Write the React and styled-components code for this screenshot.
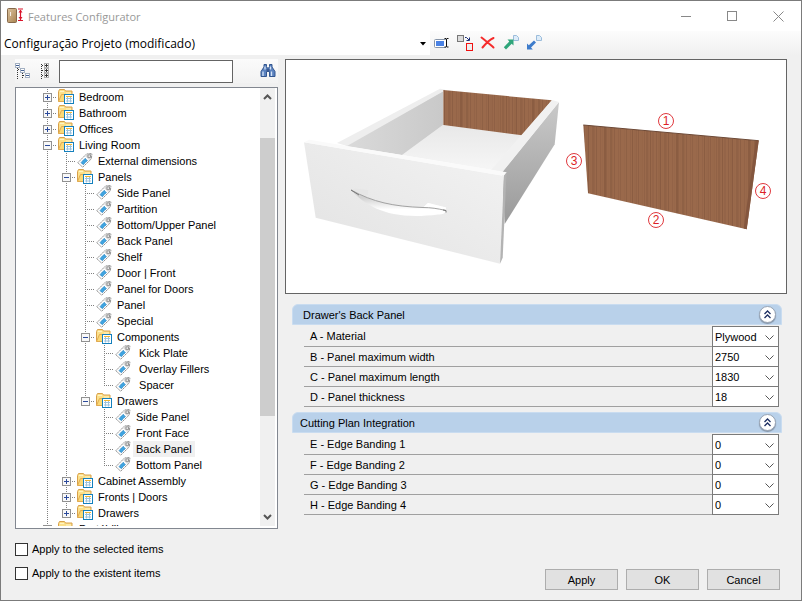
import React from "react";
import styled, { createGlobalStyle, css } from "styled-components";

const tree = [
  { label: "Bedroom", closed: true },
  { label: "Bathroom", closed: true },
  { label: "Offices", closed: true },
  {
    label: "Living Room",
    children: [
      { label: "External dimensions" },
      {
        label: "Panels",
        children: [
          { label: "Side Panel" },
          { label: "Partition" },
          { label: "Bottom/Upper Panel" },
          { label: "Back Panel" },
          { label: "Shelf" },
          { label: "Door | Front" },
          { label: "Panel for Doors" },
          { label: "Panel" },
          { label: "Special" },
          {
            label: "Components",
            children: [
              { label: " Kick Plate" },
              { label: " Overlay Fillers" },
              { label: " Spacer" },
            ],
          },
          {
            label: "Drawers",
            children: [
              { label: "Side Panel" },
              { label: "Front Face" },
              { label: "Back Panel", selected: true },
              { label: "Bottom Panel" },
            ],
          },
        ],
      },
      { label: "Cabinet Assembly", closed: true },
      { label: "Fronts | Doors", closed: true },
      { label: "Drawers", closed: true },
    ],
  },
  { label: "Portábill", closed: true },
];

const groups = [
  {
    title: " Drawer's Back Panel",
    rows: [
      ["A - Material", "Plywood"],
      ["B - Panel maximum width", "2750"],
      ["C - Panel maximum length", "1830"],
      ["D - Panel thickness", "18"],
    ],
  },
  {
    title: "Cutting Plan Integration",
    rows: [
      ["E - Edge Banding 1", "0"],
      ["F - Edge Banding 2", "0"],
      ["G - Edge Banding 3", "0"],
      ["H - Edge Banding 4", "0"],
    ],
  },
];

// turns the tree into rows; guides[i] says if the line in column i goes on
function flatten(nodes, guides = []) {
  return nodes.flatMap((node, i) => {
    const last = i === nodes.length - 1;
    const row = { ...node, guides, last };
    return node.children
      ? [row, ...flatten(node.children, [...guides, !last])]
      : [row];
  });
}

function FolderIcon() {
  return (
    <svg width="17" height="16" viewBox="0 0 17 16" aria-hidden="true">
      <path d="M.5 12.500V2.500l1-2h5l1 1.500h6.500v4" fill="#fbe08a" stroke="#d8a04a" />
      <path d="M.5 12.500l3-7H14v7z" fill="#fbd976" stroke="#e0ab52" />
      <path d="M2 2.500h4M8 4h5" stroke="#fff3c4" />
      <rect x="6.500" y="5.500" width="9" height="9" fill="#fff" stroke="#1480bd" />
      <path d="M8 7.500h6" stroke="#f2b632" />
      <path d="M8 9.500h6M8 12h6M9.500 8v5.500M12.500 8v5.500" stroke="#9cc3de" />
    </svg>
  );
}

function TagIcon() {
  return (
    <svg width="17" height="16" viewBox="0 0 17 16" aria-hidden="true">
      <path d="M.8 9.700L9.500 1l5-.5.4.4-.6 5L5.700 14.200z" fill="#fff" stroke="#939393" strokeDasharray="2 .5" />
      <path d="M9.500 1.500l4.800-.5-.5 4.500-1.600 1.600L8 3z" fill="#dadada" />
      <rect x="11" y="1.900" width="2.400" height="2.400" fill="#fff" stroke="#858585" strokeWidth=".9" />
      <path d="M4 9.500l4.200-4.200 2.200 2.200L6.200 11.700z" fill="#3fa4e0" stroke="#1c79ba" strokeWidth=".8" strokeDasharray="1.400 .6" />
    </svg>
  );
}

function AppIcon() {
  return (
    <svg width="18" height="17" viewBox="0 0 18 17" aria-hidden="true">
      <defs>
        <linearGradient id="door" x1="0" y1="0" x2="1" y2="1">
          <stop offset="0" stopColor="#dcc3a0" />
          <stop offset="1" stopColor="#a9834f" />
        </linearGradient>
      </defs>
      <rect x="1.500" y=".5" width="9" height="14" rx="1" fill="url(#door)" stroke="#86694a" />
      <path d="M4.500 4v4" stroke="#f5efe6" />
      <path d="M12 1h5M12 12.500h5M14.500 2v10" stroke="#d9142b" strokeWidth="1.200" fill="none" />
      <path d="M12.500 4.500l2-2.800 2 2.800zM12.500 9l2 2.800 2-2.800z" fill="#d9142b" />
    </svg>
  );
}

function RenameIcon() {
  return (
    <svg width="16" height="16" viewBox="0 0 16 16" aria-hidden="true">
      <rect x=".5" y="4.500" width="12" height="8" rx="1" fill="#fff" stroke="#8795a8" />
      <rect x="2" y="6" width="8" height="5" fill="#4a82e4" />
      <path d="M10.500 3.500h1.500l.5.5.5-.5h1.500M12.500 4v7.500M10.500 12h1.500l.5-.5.5.5h1.500" stroke="#111" fill="none" />
    </svg>
  );
}

function ReplaceIcon() {
  return (
    <svg width="16" height="16" viewBox="0 0 16 16" aria-hidden="true">
      <rect x=".5" y=".5" width="6" height="6" fill="#dcdcdc" stroke="#777" />
      <path d="M8 2.500h1.500l2.500 2.500M12.500 2.500v3h-3" stroke="#1b2f77" fill="none" />
      <rect x="9.500" y="8.500" width="6" height="7" fill="#eee" stroke="#f01010" />
    </svg>
  );
}

function DeleteIcon() {
  return (
    <svg width="16" height="16" viewBox="0 0 16 16" aria-hidden="true">
      <path d="M1.500 2.500C5 5 10 9.500 13.500 12.500M13.500 3C9 5 5 9.500 2.500 12.500" stroke="#f52b2b" strokeWidth="2" fill="none" strokeLinecap="round" />
    </svg>
  );
}

function DocArrowIcon({ down }) {
  return (
    <svg width="16" height="16" viewBox="0 0 16 16" aria-hidden="true">
      <path d="M10.500.5h3l2 2v3h-5z" fill="#ddecf9" stroke="#9bbcdb" />
      {down ? (
        <path d="M1 14.500V8.500l1.800 1.800L8 5.500l2 2-5 5 1.800 2z" fill="#3e7ccb" />
      ) : (
        <path d="M4.500 4.500h6v6l-1.800-1.800L3 14.500l-2.200-2.200L6.300 6.500z" fill="#2fa57a" />
      )}
    </svg>
  );
}

function CollapseTreeIcon() {
  return (
    <svg width="16" height="16" viewBox="0 0 16 16" aria-hidden="true">
      <path d="M2.500 5v11M7.500 10v6M3 6.500h3M8 12.500h3" stroke="#333" strokeDasharray="1 1" />
      <g fill="#fff" stroke="#a3b0c2">
        <rect x=".5" y=".5" width="4" height="4" />
        <rect x="5.500" y="5.500" width="4" height="4" />
        <rect x="10.500" y="10.500" width="4" height="4" />
      </g>
      <path d="M1 2.500h3M6 7.500h3M11 12.500h3" stroke="#456296" />
    </svg>
  );
}

function ExpandTreeIcon() {
  return (
    <svg width="16" height="16" viewBox="0 0 16 16" aria-hidden="true">
      <path d="M4.500 1v15M5 2.500h3M5 7.500h3M5 12.500h3" stroke="#333" strokeDasharray="1 1" />
      <g fill="#fff" stroke="#b0b0b0">
        <rect x="7.500" y=".5" width="4" height="4" />
        <rect x="7.500" y="5.500" width="4" height="4" />
        <rect x="7.500" y="10.500" width="4" height="4" />
      </g>
      <path d="M8 2.500h3M8 7.500h3M8 12.500h3M9.500 1v3M9.500 6v3M9.500 11v3" stroke="#333" />
    </svg>
  );
}

function BinocularsIcon() {
  return (
    <svg width="16" height="16" viewBox="0 0 16 16" aria-hidden="true">
      <path d="M4 1.500h2.500v2l.5 1.500h2l.5-1.500v-2H12V4l3 4.500v5H9.500v-5h-3v5H1v-5L4 4z" fill="#5b82bf" stroke="#33568f" />
      <path d="M3 8.500v4.500M11.500 8.500v4.500M5 3.500v3M10.500 3.500v3" stroke="#d5e3f6" strokeWidth="1.300" />
      <path d="M6.500 7h3" stroke="#1e3566" />
    </svg>
  );
}

function Chevron({ up }) {
  return (
    <svg width="9" height="6" viewBox="0 0 9 6" aria-hidden="true">
      <path d={up ? "M1 5l3.500-3.500L8 5" : "M1 1l3.500 3.500L8 1"} fill="none" stroke="#555" strokeWidth="2" />
    </svg>
  );
}

const grain = [0.3, 0.1, 0.5, 0.2, 0, 0.4, 0.15, 0.55, 0.05, 0.3, 0.2, 0.45, 0, 0.25, 0.1, 0.5, 0.3, 0.05, 0.35, 0.15, 0.4, 0, 0.2, 0.3, 0, 0.1, 0.35, 0, 0.2, 0.5, 0.1, 0.25, 0.4, 0.05, 0.15, 0.3];

const marks = [
  [1, 380, 61],
  [2, 370, 160],
  [3, 288, 101],
  [4, 477, 131],
];

function DrawerDrawing() {
  return (
    <svg viewBox="0 0 500 233" width="100%" role="img" aria-label="Drawer and its back panel">
      <defs>
        <pattern id="wood" width="72" height="200" patternUnits="userSpaceOnUse">
          <rect width="72" height="200" fill="#9a694b" />
          {grain.map((o, i) => (
            <rect key={i} x={i * 2} width={i % 3 ? 1 : 2} height="200" fill="#6b4430" opacity={o * 0.6} />
          ))}
        </pattern>
        <linearGradient id="front" x1="0" y1="1" x2="1" y2="0">
          <stop offset="0" stopColor="#e2e2e2" />
          <stop offset="1" stopColor="#f3f3f3" />
        </linearGradient>
        <linearGradient id="inner" x1="0" y1="0" x2="1" y2="0">
          <stop offset="0" stopColor="#dadada" />
          <stop offset="1" stopColor="#c9c9c9" />
        </linearGradient>
        <linearGradient id="outer" x1="0" y1="0" x2="0" y2="1">
          <stop offset="0" stopColor="#cacaca" />
          <stop offset="1" stopColor="#999" />
        </linearGradient>
        <linearGradient id="floor" x1="0" y1="0" x2="0" y2="1">
          <stop offset="0" stopColor="#e8e8e8" />
          <stop offset="1" stopColor="#f6f6f6" />
        </linearGradient>
        <linearGradient id="grip" x1="0" y1="0" x2="0" y2="1">
          <stop offset=".3" stopColor="#d2d2d2" />
          <stop offset=".75" stopColor="#fff" />
        </linearGradient>
      </defs>
      <path d="M157 65l79 10-30 35-90-15z" fill="url(#floor)" />
      <path d="M59 86l98-55v34l-41 30z" fill="url(#inner)" />
      <path d="M51 83L154 28.700l5.500 1L157 31.500 61 86z" fill="#eee" />
      <path d="M157.300 30L266 40.300 236 75.300 157.300 65z" fill="url(#wood)" />
      <path d="M273 42l-4.300 42.300L218.700 164 216 112z" fill="url(#outer)" />
      <path d="M266 40l7 2-56.500 70-11.500-2z" fill="#f1f1f1" />
      <path d="M18 82.300L29.700 157.700 214 203.700l4-88z" fill="url(#front)" />
      <path d="M18 82.300l5-2.600 197.700 32.600-2.700 3.700z" fill="#fafafa" />
      <path d="M218 115.700l2.500-3-3.800 85-2.700 6z" fill="#b3b3b3" />
      <path d="M65 130l4-1.500 13 1.500v5l-5 1z" fill="#e6e6e6" />
      <path d="M137 148l5-5 18 4.500v5z" fill="#fbfbfb" />
      <path d="M142 143l18 4.500v3l-23-3z" fill="#fff" />
      <path d="M65 130c22 12 42 16.500 72 17.500 8 0 14 1 23 3-1 3-3 4-8 4-47 6-71-7-87-24.500z" fill="url(#grip)" />
      <path d="M65 130c22 12 42 16.500 72 17.500 8 0 14 1 23 3" fill="none" stroke="#a2a2a2" />
      <path d="M65 130l8 5M157 150l3 .5v2" fill="none" stroke="#777" />
      <path d="M297.300 65l175.400 15.700-12 88.600L302 133.300z" fill="url(#wood)" />
      <path d="M297.300 65l175.400 15.700" stroke="#6d4936" />
      <path d="M472.700 80.700l-12 88.600-3-.7 12-88z" fill="#84563e" />
      {marks.map(([n, x, y]) => (
        <g key={n}>
          <circle cx={x} cy={y} r="7.500" fill="#fff" stroke="#e0393e" />
          <text x={x} y={y + 4} fontSize="12" textAnchor="middle" fill="#dc1f26">{n}</text>
        </g>
      ))}
    </svg>
  );
}

function TreeRow({ label, children, closed, selected, guides, last }) {
  const folder = closed || children;
  return (
    <Row role="treeitem" aria-selected={!!selected}>
      {guides.map((on, i) => (
        <Guide key={i} $line={on} />
      ))}
      <Guide $line $half={last} $branch>
        {folder && (
          <Expander aria-label={closed ? "Expand" : "Collapse"}>
            <svg width="9" height="9" viewBox="0 0 9 9">
              <rect x=".5" y=".5" width="8" height="8" fill="#f8f8f8" stroke="#919191" />
              <path d={closed ? "M2 4.500h5M4.500 2v5" : "M2 4.500h5"} stroke="#2b4a9b" />
            </svg>
          </Expander>
        )}
      </Guide>
      <NodeIcon>{folder ? <FolderIcon /> : <TagIcon />}</NodeIcon>
      <NodeLabel $selected={selected}>{label}</NodeLabel>
    </Row>
  );
}

export default function App() {
  return (
    <>
      <GlobalStyle />
      <Window>
        <TitleBar>
          <AppIcon />
          <h1>Features Configurator</h1>
          <WindowButton aria-label="Minimize">
            <svg width="11" height="11"><path d="M0 5.500h10" stroke="#888" /></svg>
          </WindowButton>
          <WindowButton aria-label="Maximize">
            <svg width="11" height="11"><rect x=".5" y=".5" width="9" height="9" fill="none" stroke="#888" /></svg>
          </WindowButton>
          <WindowButton aria-label="Close">
            <svg width="11" height="11"><path d="M.5.5l10 10M10.500.5l-10 10" stroke="#888" /></svg>
          </WindowButton>
        </TitleBar>
        <ToolStrip>
          <ProjectBox>
            <select aria-label="Configuration">
              <option>Configuração Projeto (modificado)</option>
            </select>
            <svg width="6" height="4" viewBox="0 0 6 4" aria-hidden="true"><path d="M0 0h6L3 3.500z" /></svg>
          </ProjectBox>
          <Tools>
            <IconButton aria-label="Rename"><RenameIcon /></IconButton>
            <IconButton aria-label="Replace"><ReplaceIcon /></IconButton>
            <IconButton aria-label="Delete"><DeleteIcon /></IconButton>
            <IconButton aria-label="Export"><DocArrowIcon /></IconButton>
            <IconButton aria-label="Import"><DocArrowIcon down /></IconButton>
          </Tools>
        </ToolStrip>
        <Body>
          <Side>
            <SearchBar>
              <IconButton aria-label="Collapse all"><CollapseTreeIcon /></IconButton>
              <IconButton aria-label="Expand all"><ExpandTreeIcon /></IconButton>
              <input type="text" aria-label="Search" />
              <IconButton aria-label="Find"><BinocularsIcon /></IconButton>
            </SearchBar>
            <TreeBox>
              <TreeList role="tree">
                {flatten(tree).map((row, i) => (
                  <TreeRow key={i} {...row} />
                ))}
              </TreeList>
              <ScrollBar>
                <ScrollButton aria-label="Scroll up"><Chevron up /></ScrollButton>
                <Track $part={32} />
                <Track $part={280} $thumb />
                <Track $part={93} />
                <ScrollButton aria-label="Scroll down"><Chevron /></ScrollButton>
              </ScrollBar>
            </TreeBox>
            <Checks>
              <Check><input type="checkbox" />Apply to the selected items</Check>
              <Check><input type="checkbox" />Apply to the existent items</Check>
            </Checks>
          </Side>
          <Main>
            <Preview><DrawerDrawing /></Preview>
            {groups.map((group) => (
              <Group key={group.title}>
                <GroupHeader>
                  <h2>{group.title}</h2>
                  <RoundButton aria-label="Collapse group">
                    <svg width="9" height="9" viewBox="0 0 9 9">
                      <path d="M1.500 4l3-3 3 3M1.500 8l3-3 3 3" fill="none" stroke="#1d2f63" strokeWidth="1.300" />
                    </svg>
                  </RoundButton>
                </GroupHeader>
                <Fields>
                  {group.rows.map(([name, value]) => (
                    <Field key={name}>
                      <span>{name}</span>
                      <SelectBox>
                        <select>
                          <option>{value}</option>
                        </select>
                        <svg width="9" height="5" viewBox="0 0 9 5" aria-hidden="true">
                          <path d="M.5.5l4 4 4-4" fill="none" stroke="#555" />
                        </svg>
                      </SelectBox>
                    </Field>
                  ))}
                </Fields>
              </Group>
            ))}
            <Actions>
              <Button>Apply</Button>
              <Button>OK</Button>
              <Button>Cancel</Button>
            </Actions>
          </Main>
        </Body>
      </Window>
    </>
  );
}

const GlobalStyle = createGlobalStyle`
  * {
    box-sizing: border-box;
  }
  body {
    margin: 0;
    font-family: "Liberation Sans", Arial, sans-serif;
    font-size: 11px;
    color: #000;
  }
  button, input, select {
    font: inherit;
    color: inherit;
    margin: 0;
  }
  h1, h2 {
    margin: 0;
    font-weight: normal;
  }
  svg {
    display: block;
    flex: none;
  }
`;

const Window = styled.div`
  display: flex;
  flex-direction: column;
  height: 100vh;
  border: 1px solid #7b7b7b;
  background: #f0f0f0;
`;

const TitleBar = styled.header`
  display: flex;
  align-items: center;
  height: 30px;
  padding-left: 5px;
  background: #fff;
  h1 {
    flex: 1;
    padding-left: 4px;
    font-family: "Open Sans", sans-serif;
    font-size: 11px;
    color: #999;
  }
`;

const WindowButton = styled.button`
  display: flex;
  align-items: center;
  justify-content: center;
  width: 46px;
  height: 30px;
  padding: 0;
  border: 0;
  background: none;
`;

const ToolStrip = styled.div`
  display: flex;
  height: 24px;
  background: linear-gradient(#fcfcfc, #f0f0f0);
`;

const ProjectBox = styled.div`
  position: relative;
  flex: 0 0 429px;
  display: flex;
  background: #fff;
  select {
    flex: 1;
    appearance: none;
    padding: 0 3px;
    border: 0;
    background: none;
    font-family: "Open Sans", sans-serif;
    font-size: 12px;
  }
  svg {
    position: absolute;
    right: 4px;
    top: 11px;
    pointer-events: none;
  }
`;

const Tools = styled.div`
  display: flex;
  align-items: center;
  gap: 7px;
  padding-left: 4px;
`;

const IconButton = styled.button`
  padding: 0;
  border: 0;
  background: none;
`;

const Body = styled.div`
  flex: 1;
  min-height: 0;
  display: flex;
  gap: 7px;
  padding: 4px 14px 10px 14px;
`;

const Side = styled.section`
  flex: 0 0 263px;
  display: flex;
  flex-direction: column;
`;

const SearchBar = styled.div`
  display: flex;
  align-items: center;
  gap: 6px;
  height: 24px;
  margin-bottom: 4px;
  background: linear-gradient(#fbfbfb, #f2f2f2);
  input {
    flex: 0 1 174px;
    height: 23px;
    padding: 0 4px;
    border: 1px solid #646464;
    background: #fff;
  }
  button:last-child {
    margin-left: auto;
    margin-right: 2px;
  }
`;

const TreeBox = styled.div`
  flex: 1;
  min-height: 0;
  display: flex;
  padding: 0 2px 2px 0;
  border: 1px solid #828790;
  background: #fff;
`;

const TreeList = styled.ul`
  flex: 1;
  margin: 0;
  padding: 1px 0 0 22px;
  overflow: hidden;
  list-style: none;
`;

const Row = styled.li`
  display: flex;
  height: 16px;
`;

const Guide = styled.span`
  position: relative;
  flex: 0 0 19px;
  ${(props) =>
    props.$line &&
    css`
      &::before {
        content: "";
        position: absolute;
        left: 9px;
        top: 0;
        width: 1px;
        height: ${props.$half ? "8px" : "16px"};
        background: repeating-linear-gradient(#808080 0 1px, transparent 1px 2px);
      }
    `}
  ${(props) =>
    props.$branch &&
    css`
      &::after {
        content: "";
        position: absolute;
        left: 9px;
        right: 0;
        top: 8px;
        height: 1px;
        background: repeating-linear-gradient(90deg, #808080 0 1px, transparent 1px 2px);
      }
    `}
`;

const Expander = styled.button`
  position: absolute;
  z-index: 1;
  left: 5px;
  top: 4px;
  padding: 0;
  border: 0;
  background: none;
`;

const NodeIcon = styled.span`
  flex: 0 0 19px;
  padding-left: 1px;
`;

const NodeLabel = styled.span`
  padding: 0 3px;
  line-height: 16px;
  white-space: pre;
  background: ${(props) => (props.$selected ? "#f0f0f0" : "none")};
`;

const ScrollBar = styled.div`
  flex: 0 0 15px;
  display: flex;
  flex-direction: column;
  background: #f0f0f0;
`;

const ScrollButton = styled.button`
  display: flex;
  align-items: center;
  justify-content: center;
  height: 18px;
  padding: 0;
  border: 0;
  background: none;
`;

const Track = styled.div`
  flex: ${(props) => props.$part} 0 0;
  background: ${(props) => (props.$thumb ? "#cdcdcd" : "none")};
`;

const Checks = styled.div`
  display: flex;
  flex-direction: column;
  gap: 8px;
  padding: 12px 0 9px;
`;

const Check = styled.label`
  display: flex;
  align-items: center;
  gap: 4px;
  height: 16px;
  input {
    appearance: none;
    width: 13px;
    height: 13px;
    border: 1px solid #333;
    background: #fff;
  }
`;

const Main = styled.main`
  flex: 1;
  min-width: 0;
  display: flex;
  flex-direction: column;
`;

const Preview = styled.div`
  margin-bottom: 10px;
  border: 1px solid #646464;
  background: #fff;
`;

const Group = styled.section`
  margin: 0 5px 5px 7px;
`;

const GroupHeader = styled.div`
  display: flex;
  align-items: center;
  justify-content: space-between;
  height: 21px;
  margin-bottom: 1px;
  padding: 0 5px 0 7px;
  border: 1px solid #c9dcf0;
  border-radius: 6px 6px 0 0;
  background: #b9d1ea;
  h2 {
    font-size: 11px;
    white-space: pre;
  }
`;

const RoundButton = styled.button`
  display: flex;
  align-items: center;
  justify-content: center;
  width: 17px;
  height: 17px;
  padding: 0;
  border: 1px solid #98a4b4;
  border-radius: 50%;
  background: #fff;
  box-shadow: 0 1px 1px #8090a4;
`;

const Fields = styled.div`
  margin: 0 3px 0 12px;
`;

const Field = styled.label`
  display: flex;
  height: 20px;
  &:first-child {
    height: 21px;
  }
  span {
    flex: 1;
    padding-left: 6px;
    border-bottom: 1px solid #a0a0a0;
    line-height: 21px;
  }
`;

const SelectBox = styled.div`
  position: relative;
  flex: 0 0 67px;
  display: flex;
  border: 1px solid #7a7a7a;
  border-top: 0;
  background: #fff;
  ${Field}:first-child & {
    border-top: 1px solid #7a7a7a;
  }
  select {
    flex: 1;
    appearance: none;
    padding: 0 2px;
    border: 0;
    background: none;
  }
  svg {
    position: absolute;
    right: 4px;
    top: 8px;
    pointer-events: none;
  }
`;

const Actions = styled.div`
  display: flex;
  justify-content: flex-end;
  gap: 8px;
  margin-top: auto;
  padding-right: 7px;
`;

const Button = styled.button`
  width: 73px;
  height: 21px;
  padding: 0;
  border: 1px solid #adadad;
  background: #e1e1e1;
`;
